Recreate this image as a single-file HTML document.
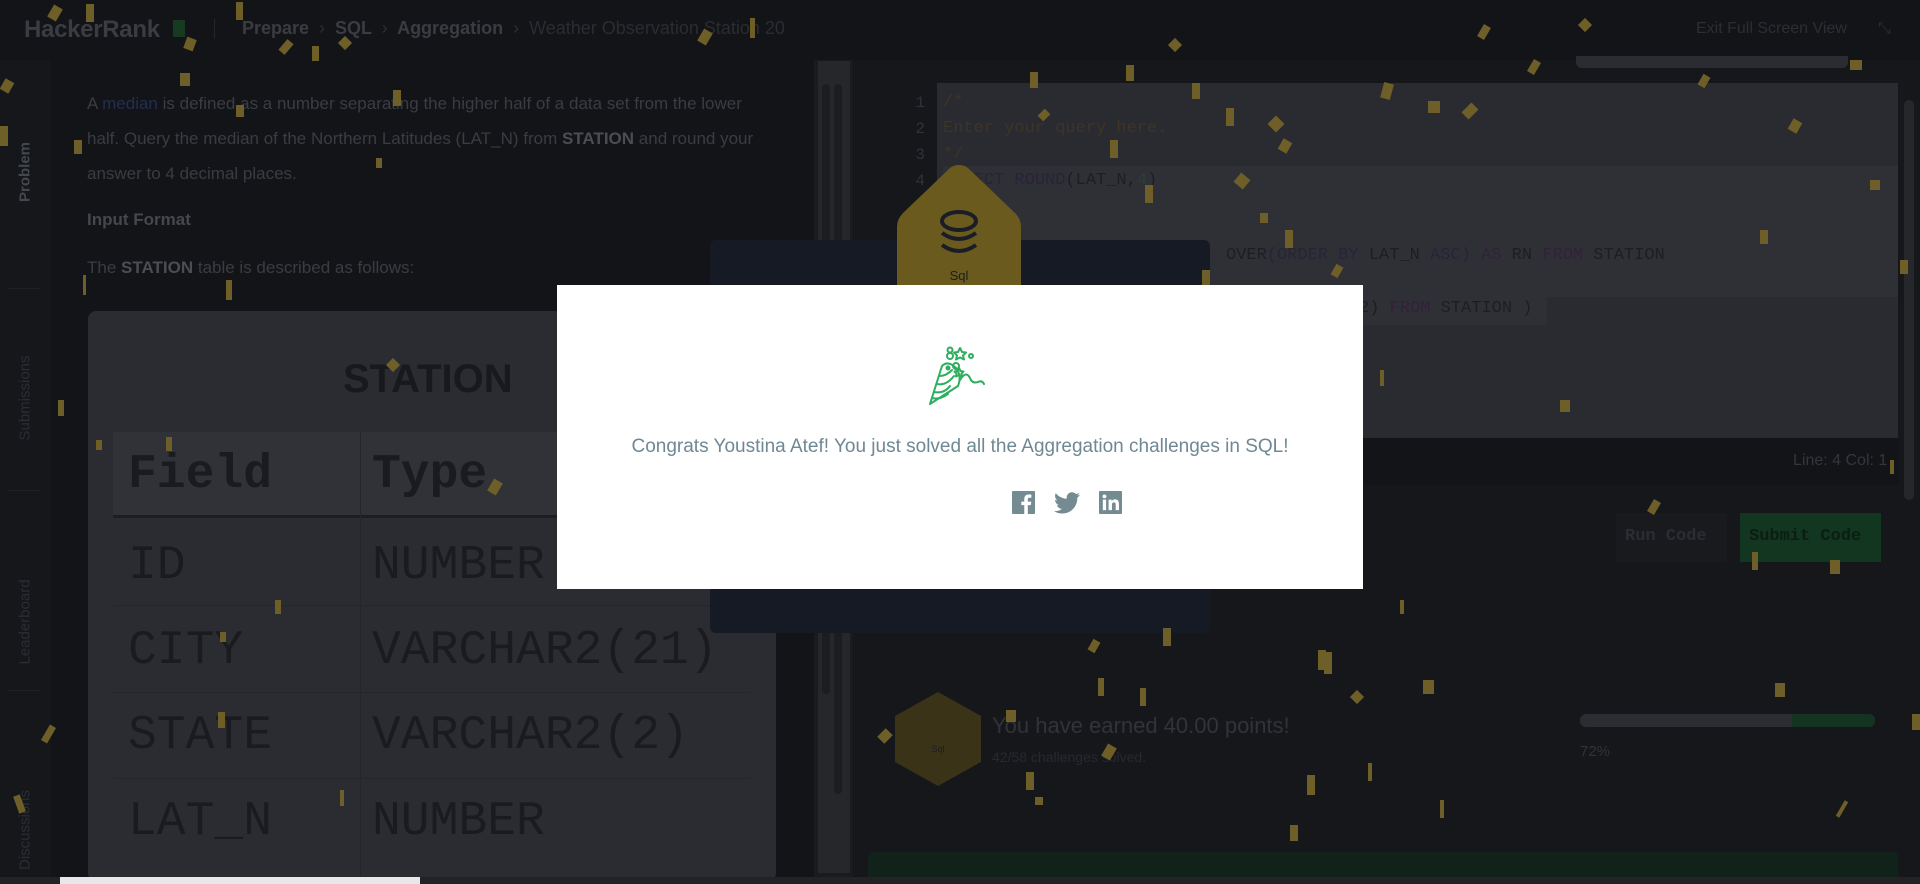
<!DOCTYPE html>
<html><head><meta charset="utf-8"><style>
*{margin:0;padding:0;box-sizing:border-box}
body{width:1920px;height:884px;overflow:hidden;background:#131418;font-family:"Liberation Sans",sans-serif;position:relative}
.a{position:absolute}
.mono{font-family:"Liberation Mono",monospace}
.tab{position:absolute;left:25px;transform:translate(-50%,-50%) rotate(-90deg);font-size:15px;color:#2a2d32;white-space:nowrap}
.c{position:absolute;background:#6e5e28}
.t{position:absolute;font-family:"Liberation Mono",monospace;font-size:48px;line-height:56px;color:#1a1b1e}
</style></head><body>
<!-- top bar -->
<div class="a" style="left:24px;top:16px;font-size:24px;font-weight:bold;color:#3a3c42;letter-spacing:-0.3px">HackerRank</div>
<div class="a" style="left:173px;top:20px;width:12px;height:17px;background:#173a22"></div>
<div class="a" style="left:214px;top:19px;width:1px;height:20px;background:#24262b"></div>
<div class="a" style="left:242px;top:18px;font-size:18px;font-weight:bold;color:#3a3c42;white-space:nowrap">Prepare <span style="color:#2c2e33;font-weight:normal">&nbsp;›&nbsp;</span> SQL <span style="color:#2c2e33;font-weight:normal">&nbsp;›&nbsp;</span> Aggregation <span style="color:#2c2e33;font-weight:normal">&nbsp;›&nbsp;</span> <span style="color:#2a2c31;font-weight:normal">Weather Observation Station 20</span></div>
<div class="a" style="left:1696px;top:20px;font-size:16px;color:#2c2e33">Exit Full Screen View</div>
<div class="a" style="left:1878px;top:20px;font-size:16px;color:#2c2e33">⤡</div>

<!-- left tabs -->
<div class="a" style="left:0;top:60px;width:51px;height:817px;background:#15171b"></div>
<div class="tab" style="top:172px;font-weight:bold;color:#44474d">Problem</div>
<div class="tab" style="top:398px">Submissions</div>
<div class="a" style="left:8px;top:288px;width:32px;height:1px;background:#1f2126"></div>
<div class="tab" style="top:622px">Leaderboard</div>
<div class="a" style="left:8px;top:490px;width:32px;height:1px;background:#1f2126"></div>
<div class="a" style="left:8px;top:690px;width:32px;height:1px;background:#1f2126"></div>
<div class="tab" style="top:830px">Discussions</div>

<!-- problem text -->
<div class="a" style="left:87px;top:86px;width:680px;font-size:17px;line-height:35px;color:#3a3c42">A <span style="color:#222f4e">median</span> is defined as a number separating the higher half of a data set from the lower half. Query the median of the Northern Latitudes (LAT_N) from <b style="color:#4a4d53">STATION</b> and round your answer to 4 decimal places.</div>
<div class="a" style="left:87px;top:210px;font-size:17px;font-weight:bold;color:#44474d">Input Format</div>
<div class="a" style="left:87px;top:258px;font-size:17px;color:#3a3c42">The <b style="color:#4a4d53">STATION</b> table is described as follows:</div>

<!-- table image -->
<div class="a" style="left:88px;top:311px;width:688px;height:570px;background:#2a2c31;border-radius:8px"></div>
<div class="a" style="left:343px;top:357px;font-size:40px;font-weight:bold;color:#18191c">STATION</div>
<div class="a" style="left:113px;top:432px;width:637px;height:86px;background:#303237;border-bottom:3px solid #1d1e21"></div>
<div class="a" style="left:360px;top:432px;width:1px;height:450px;background:#24262a"></div>
<div class="a" style="left:113px;top:605px;width:637px;height:1px;background:#24262a"></div>
<div class="a" style="left:113px;top:692px;width:637px;height:1px;background:#24262a"></div>
<div class="a" style="left:113px;top:778px;width:637px;height:1px;background:#24262a"></div>
<div class="t" style="left:128px;top:447px;font-weight:bold">Field</div>
<div class="t" style="left:372px;top:447px;font-weight:bold">Type</div>
<div class="t" style="left:128px;top:538px">ID</div>
<div class="t" style="left:128px;top:623px">CITY</div>
<div class="t" style="left:128px;top:708px">STATE</div>
<div class="t" style="left:128px;top:794px">LAT_N</div>
<div class="t" style="left:372px;top:538px">NUMBER</div>
<div class="t" style="left:372px;top:623px">VARCHAR2(21)</div>
<div class="t" style="left:372px;top:708px">VARCHAR2(2)</div>
<div class="t" style="left:372px;top:794px">NUMBER</div>

<!-- scrollbar -->
<div class="a" style="left:814px;top:60px;width:39px;height:817px;background:#1a1b1f"></div>
<div class="a" style="left:818px;top:61px;width:32px;height:812px;background:#25272b"></div>
<div class="a" style="left:822px;top:84px;width:8px;height:610px;background:#1c1d21;border-radius:4px"></div>
<div class="a" style="left:834px;top:84px;width:8px;height:710px;background:#1c1d21;border-radius:4px"></div>

<!-- editor -->
<div class="a" style="left:853px;top:60px;width:1067px;height:817px;background:#16171b"></div>
<div class="a" style="left:1576px;top:56px;width:272px;height:12px;background:#2a2c31;border-radius:0 0 6px 6px"></div>
<div class="a" style="left:937px;top:83px;width:961px;height:355px;background:#2a2b30"></div>
<div class="a" style="left:943px;top:166px;width:955px;height:131px;background:#2f3035"></div>
<div class="a" style="left:1000px;top:297px;width:547px;height:28px;background:#2f3035"></div>
<div class="a mono" style="left:905px;top:90px;font-size:16px;line-height:26px;color:#2f3238;text-align:right;width:20px">1<br>2<br>3<br>4</div>
<div class="a mono" style="left:943px;top:90px;font-size:17px;line-height:26px;color:#3e3428;white-space:pre">/*
Enter your query here.
*/
<span style="color:#2a2238">SELECT ROUND</span><span style="color:#1d1e22">(LAT_N,</span><span style="color:#28403a">4</span><span style="color:#1d1e22">)</span></div>
<div class="a mono" style="left:1226px;top:246px;font-size:17px;color:#1d1e22;white-space:pre">OVER<span style="color:#2a2238">(ORDER BY</span> LAT_N <span style="color:#2a2238">ASC)</span> <span style="color:#33203a">AS</span> RN <span style="color:#33203a">FROM</span> STATION</div>
<div class="a mono" style="left:1359px;top:299px;font-size:17px;color:#1d1e22;white-space:pre">2) <span style="color:#33203a">FROM</span> STATION )</div>
<div class="a" style="left:1904px;top:100px;width:10px;height:400px;background:#25272b;border-radius:5px"></div>
<!-- status -->
<div class="a" style="left:853px;top:438px;width:1045px;height:47px;background:#131418"></div>
<div class="a" style="left:1793px;top:452px;font-size:16px;color:#33363c">Line: 4 Col: 1</div>
<div class="a" style="left:1616px;top:513px;width:111px;height:49px;background:#191a1e"></div>
<div class="a mono" style="left:1625px;top:527px;font-size:17px;font-weight:bold;color:#2a2d33">Run Code</div>
<div class="a" style="left:1740px;top:513px;width:141px;height:49px;background:#12361f"></div>
<div class="a mono" style="left:1749px;top:527px;font-size:17px;font-weight:bold;color:#0c1e13">Submit Code</div>

<!-- dark panel & badge -->
<div class="a" style="left:710px;top:240px;width:500px;height:393px;background:#161a24;border-radius:6px"></div>
<svg class="a" style="left:889px;top:163px" width="140" height="140" viewBox="0 0 140 140"><path d="M70 2 Q76 2 80 6 L126 50 Q132 56 132 64 L132 140 L8 140 L8 64 Q8 56 14 50 L60 6 Q64 2 70 2Z" fill="#6b5a1e"/><g fill="none" stroke="#1b1d26" stroke-width="4"><ellipse cx="70" cy="58" rx="17" ry="9"/><path d="M53 70q17 12 34 0M53 82q17 12 34 0"/></g><text x="70" y="117" font-family="Liberation Sans" font-size="13" text-anchor="middle" fill="#1b1d26">Sql</text></svg>

<!-- lower section -->
<svg class="a" style="left:893px;top:692px" width="90" height="94" viewBox="0 0 90 94"><polygon points="45,0 88,24 88,70 45,94 2,70 2,24" fill="#3a3318"/><text x="45" y="60" font-family="Liberation Sans" font-size="9" text-anchor="middle" fill="#1b1d26">Sql</text></svg>
<div class="a" style="left:992px;top:713px;font-size:22px;color:#303338">You have earned 40.00 points!</div>
<div class="a" style="left:992px;top:749px;font-size:14px;color:#26292e">42/58 challenges solved.</div>
<div class="a" style="left:1580px;top:714px;width:295px;height:13px;background:#2b2d32;border-radius:6px;overflow:hidden"><div style="margin-left:212px;height:13px;background:#143320"></div></div>
<div class="a" style="left:1580px;top:743px;font-size:15px;color:#303338">72%</div>
<div class="a" style="left:868px;top:852px;width:1030px;height:30px;background:#11221a;border-radius:5px"></div>
<div class="a" style="left:0;top:877px;width:1920px;height:7px;background:#222326"></div>
<div class="a" style="left:60px;top:877px;width:360px;height:7px;background:#e8e8e8"></div>

<!-- confetti -->
<div class="c" style="left:50px;top:6px;width:10px;height:14px;transform:rotate(30deg)"></div>
<div class="c" style="left:86px;top:4px;width:8px;height:18px"></div>
<div class="c" style="left:236px;top:2px;width:7px;height:18px"></div>
<div class="c" style="left:185px;top:38px;width:10px;height:12px;transform:rotate(20deg)"></div>
<div class="c" style="left:180px;top:73px;width:10px;height:13px"></div>
<div class="c" style="left:282px;top:40px;width:8px;height:14px;transform:rotate(40deg)"></div>
<div class="c" style="left:312px;top:46px;width:7px;height:15px"></div>
<div class="c" style="left:340px;top:38px;width:10px;height:10px;transform:rotate(45deg)"></div>
<div class="c" style="left:2px;top:80px;width:10px;height:12px;transform:rotate(30deg)"></div>
<div class="c" style="left:0;top:126px;width:8px;height:20px"></div>
<div class="c" style="left:236px;top:105px;width:8px;height:12px"></div>
<div class="c" style="left:393px;top:90px;width:8px;height:16px"></div>
<div class="c" style="left:74px;top:140px;width:8px;height:14px"></div>
<div class="c" style="left:376px;top:158px;width:6px;height:10px"></div>
<div class="c" style="left:83px;top:275px;width:3px;height:20px"></div>
<div class="c" style="left:226px;top:280px;width:6px;height:20px"></div>
<div class="c" style="left:58px;top:400px;width:6px;height:16px"></div>
<div class="c" style="left:388px;top:360px;width:10px;height:10px;transform:rotate(45deg)"></div>
<div class="c" style="left:96px;top:440px;width:6px;height:10px"></div>
<div class="c" style="left:166px;top:437px;width:6px;height:14px"></div>
<div class="c" style="left:490px;top:480px;width:10px;height:14px;transform:rotate(30deg)"></div>
<div class="c" style="left:275px;top:600px;width:6px;height:14px"></div>
<div class="c" style="left:220px;top:632px;width:6px;height:10px"></div>
<div class="c" style="left:45px;top:725px;width:7px;height:18px;transform:rotate(30deg)"></div>
<div class="c" style="left:218px;top:712px;width:7px;height:16px"></div>
<div class="c" style="left:340px;top:790px;width:4px;height:16px"></div>
<div class="c" style="left:16px;top:795px;width:7px;height:18px;transform:rotate(-20deg)"></div>
<div class="c" style="left:565px;top:360px;width:4px;height:20px"></div>
<div class="c" style="left:700px;top:30px;width:10px;height:14px;transform:rotate(30deg)"></div>
<div class="c" style="left:750px;top:18px;width:5px;height:20px"></div>
<div class="c" style="left:1030px;top:72px;width:8px;height:16px"></div>
<div class="c" style="left:1126px;top:65px;width:8px;height:16px"></div>
<div class="c" style="left:1040px;top:110px;width:8px;height:10px;transform:rotate(45deg)"></div>
<div class="c" style="left:1192px;top:83px;width:8px;height:16px"></div>
<div class="c" style="left:1170px;top:40px;width:10px;height:10px;transform:rotate(45deg)"></div>
<div class="c" style="left:1226px;top:108px;width:8px;height:18px"></div>
<div class="c" style="left:1110px;top:140px;width:8px;height:18px"></div>
<div class="c" style="left:1236px;top:175px;width:12px;height:12px;transform:rotate(40deg)"></div>
<div class="c" style="left:1382px;top:83px;width:10px;height:16px;transform:rotate(15deg)"></div>
<div class="c" style="left:1270px;top:118px;width:12px;height:12px;transform:rotate(45deg)"></div>
<div class="c" style="left:1428px;top:101px;width:12px;height:12px"></div>
<div class="c" style="left:1465px;top:104px;width:10px;height:14px;transform:rotate(45deg)"></div>
<div class="c" style="left:1280px;top:140px;width:10px;height:12px;transform:rotate(30deg)"></div>
<div class="c" style="left:1145px;top:185px;width:8px;height:18px"></div>
<div class="c" style="left:1480px;top:25px;width:8px;height:14px;transform:rotate(30deg)"></div>
<div class="c" style="left:1530px;top:60px;width:8px;height:14px;transform:rotate(30deg)"></div>
<div class="c" style="left:1580px;top:20px;width:10px;height:10px;transform:rotate(45deg)"></div>
<div class="c" style="left:1700px;top:75px;width:8px;height:12px;transform:rotate(30deg)"></div>
<div class="c" style="left:1790px;top:120px;width:10px;height:12px;transform:rotate(30deg)"></div>
<div class="c" style="left:1850px;top:60px;width:12px;height:10px"></div>
<div class="c" style="left:1870px;top:180px;width:10px;height:10px"></div>
<div class="c" style="left:1760px;top:230px;width:8px;height:14px"></div>
<div class="c" style="left:1900px;top:260px;width:8px;height:14px"></div>
<div class="c" style="left:1260px;top:213px;width:8px;height:10px"></div>
<div class="c" style="left:1285px;top:230px;width:8px;height:18px"></div>
<div class="c" style="left:1333px;top:265px;width:8px;height:12px;transform:rotate(30deg)"></div>
<div class="c" style="left:1202px;top:270px;width:8px;height:16px"></div>
<div class="c" style="left:1290px;top:420px;width:8px;height:20px"></div>
<div class="c" style="left:1380px;top:370px;width:4px;height:16px"></div>
<div class="c" style="left:1560px;top:400px;width:10px;height:12px"></div>
<div class="c" style="left:1650px;top:500px;width:8px;height:14px;transform:rotate(30deg)"></div>
<div class="c" style="left:1752px;top:552px;width:6px;height:18px"></div>
<div class="c" style="left:1830px;top:560px;width:10px;height:14px"></div>
<div class="c" style="left:1890px;top:460px;width:4px;height:14px"></div>
<div class="c" style="left:1090px;top:640px;width:8px;height:12px;transform:rotate(30deg)"></div>
<div class="c" style="left:1163px;top:628px;width:8px;height:18px"></div>
<div class="c" style="left:1098px;top:678px;width:6px;height:18px"></div>
<div class="c" style="left:1140px;top:688px;width:6px;height:18px"></div>
<div class="c" style="left:1318px;top:650px;width:8px;height:20px"></div>
<div class="c" style="left:1400px;top:600px;width:4px;height:14px"></div>
<div class="c" style="left:1324px;top:652px;width:8px;height:22px"></div>
<div class="c" style="left:1352px;top:692px;width:10px;height:10px;transform:rotate(45deg)"></div>
<div class="c" style="left:1423px;top:680px;width:11px;height:14px"></div>
<div class="c" style="left:1006px;top:710px;width:10px;height:12px"></div>
<div class="c" style="left:1104px;top:745px;width:10px;height:14px;transform:rotate(30deg)"></div>
<div class="c" style="left:1026px;top:772px;width:8px;height:18px"></div>
<div class="c" style="left:1035px;top:797px;width:8px;height:8px"></div>
<div class="c" style="left:1307px;top:775px;width:8px;height:20px"></div>
<div class="c" style="left:1368px;top:763px;width:4px;height:18px"></div>
<div class="c" style="left:1290px;top:825px;width:8px;height:16px"></div>
<div class="c" style="left:1440px;top:800px;width:4px;height:18px"></div>
<div class="c" style="left:1840px;top:800px;width:4px;height:18px;transform:rotate(30deg)"></div>
<div class="c" style="left:1775px;top:683px;width:10px;height:14px"></div>
<div class="c" style="left:1912px;top:714px;width:8px;height:16px"></div>
<div class="c" style="left:880px;top:730px;width:10px;height:12px;transform:rotate(45deg)"></div>
<div class="c" style="left:790px;top:510px;width:6px;height:10px"></div>

<!-- modal -->
<div class="a" style="left:557px;top:285px;width:806px;height:304px;background:#fff"></div>
<svg class="a" style="left:926px;top:346px" width="70" height="62" viewBox="0 0 70 62" fill="none" stroke="#2fae5f" stroke-width="2" stroke-linejoin="round" stroke-linecap="round">
<path d="M4 58 L16 20 Q22 14 30 22 Q36 30 32 40 Z"/>
<path d="M8 46 Q18 48 24 40 M6 52 Q14 54 22 48 M11 38 Q20 40 28 30 M14 30 Q20 30 26 24"/>
<circle cx="24" cy="10" r="3"/><circle cx="24" cy="4" r="2.5"/>
<path d="M34 2 l2 4 4 .5 -3 3 1 4 -4-2 -4 2 1-4 -3-3 4-.5z"/>
<circle cx="45" cy="10" r="2"/>
<path d="M33 22 l1.5 3 3 .5 -2 2 .5 3 -3-1.5 -3 1.5 .5-3 -2-2 3-.5z"/>
<circle cx="30" cy="20" r="3"/>
<path d="M34 34 Q40 24 44 32 Q46 38 52 36 Q56 34 58 38"/>
<circle cx="22" cy="22" r="1.5" fill="#2fae5f"/>
</svg>
<div class="a" style="left:557px;top:436px;width:806px;text-align:center;font-size:19px;color:#6f8894">Congrats Youstina Atef! You just solved all the Aggregation challenges in SQL!</div>
<svg class="a" style="left:1012px;top:491px" width="23" height="23" viewBox="0 0 24 24"><rect width="24" height="24" rx="1" fill="#738b91"/><path d="M16.5 24V14.7h3.1l.5-3.6h-3.6V8.8c0-1 .3-1.8 1.8-1.8h1.9V3.8c-.3 0-1.5-.1-2.8-.1-2.8 0-4.6 1.7-4.6 4.8v2.6H9.7v3.6h3.1V24z" fill="#fff"/></svg>
<svg class="a" style="left:1054px;top:492px" width="26" height="22" viewBox="0 0 24 20"><path d="M24 2.4c-.9.4-1.8.7-2.8.8 1-.6 1.8-1.6 2.2-2.7-1 .6-2 1-3.1 1.2C19.3.7 18 .1 16.6.1c-2.7 0-4.9 2.2-4.900 4.9 0 .4 0 .8.1 1.1C7.7 5.9 4.1 4 1.7 1 1.2 1.7 1 2.6 1 3.5c0 1.7.9 3.2 2.2 4.1-.8 0-1.6-.2-2.2-.6v.1c0 2.4 1.7 4.4 3.9 4.8-.4.1-.8.2-1.3.2-.3 0-.6 0-.9-.1.6 2 2.4 3.4 4.6 3.4-1.7 1.300-3.8 2.1-6.1 2.1H0c2.2 1.4 4.8 2.2 7.5 2.2 9.1 0 14-7.5 14-14v-.6c1-.7 1.8-1.6 2.5-2.6z" fill="#738b91"/></svg>
<svg class="a" style="left:1099px;top:491px" width="23" height="23" viewBox="0 0 24 24"><rect width="24" height="24" rx="1" fill="#738b91"/><rect x="4" y="9" width="3.4" height="11" fill="#fff"/><circle cx="5.7" cy="5.6" r="2" fill="#fff"/><path d="M10 9h3.2v1.6c.5-.9 1.7-1.9 3.5-1.9 3.5 0 4.1 2.3 4.1 5.3V20h-3.4v-5.2c0-1.3 0-2.9-1.8-2.9s-2.1 1.4-2.1 2.8V20H10z" fill="#fff"/></svg>
</body></html>
